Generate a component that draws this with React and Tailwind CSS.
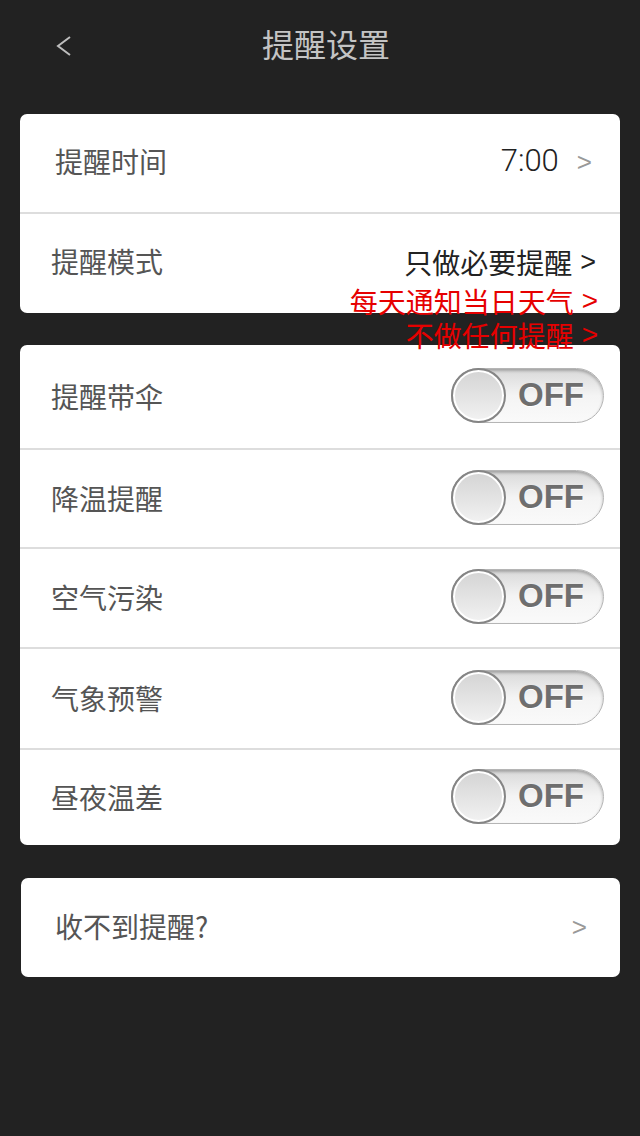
import React from 'react';

const cjk = { fontFamily: '"Noto Sans CJK SC", "Noto Sans", sans-serif' };

const Toggle = () => (
    <div className="relative w-[153px] h-[55px] rounded-full border border-[#b5b5b5] bg-gradient-to-b from-[#d9d9d9] via-[#f4f4f4] to-[#fafafa] shadow-[inset_0_2px_3px_rgba(0,0,0,0.25)]">
        <div className="absolute left-[-1px] top-[-1px] w-[55px] h-[55px] rounded-full border-2 border-[#858585] bg-gradient-to-b from-[#d4d4d4] to-[#f2f2f2] shadow-[inset_0_0_0_2px_#ffffff]" />
        <span
            className="absolute left-[66px] top-[8px] text-[33px] leading-[36px] font-bold text-[#6e6e6e] [text-shadow:0_1px_0_#ffffff]"
            style={{ fontFamily: '"Liberation Sans", Arial, sans-serif' }}
        >
            OFF
        </span>
    </div>
);

const Chevron = ({ className }) => (
    <span className={className} style={{ fontFamily: '"Liberation Sans", Arial, sans-serif' }}>&gt;</span>
);

export default function App() {
    const switches = [
        { label: '提醒带伞', h: 'h-[105px]' },
        { label: '降温提醒', h: 'h-[99px]' },
        { label: '空气污染', h: 'h-[100px]' },
        { label: '气象预警', h: 'h-[101px]' },
        { label: '昼夜温差', h: 'h-[95px]' },
    ];

    return (
        <div className="w-[640px] min-h-[1136px] bg-[#222222]" style={cjk}>
            {/* header */}
            <div className="relative h-[90px] flex items-center justify-center pl-[12px] pb-[4px]">
                <svg className="absolute left-[56px] top-[36px]" width="16" height="20" viewBox="0 0 16 20">
                    <polyline points="14,1 2,10 14,19" fill="none" stroke="#bdbdbd" strokeWidth="2" />
                </svg>
                <h1 className="text-[32px] text-[#c4c4c4]">提醒设置</h1>
            </div>

            <div className="px-[20px] pt-[24px] flex flex-col">
                {/* time + mode */}
                <div className="relative z-10 w-[600px] bg-white rounded-[7px]">
                    <div className="h-[100px] flex items-center pl-[35px] pr-[28px] border-b-2 border-[#dddddd]">
                        <span className="text-[28px] text-[#555555] -mt-[4px]">提醒时间</span>
                        <span className="ml-auto text-[31px] font-light text-[#222222] -mt-[4px]" style={{ fontFamily: 'Roboto, sans-serif' }}>7:00</span>
                        <Chevron className="ml-[18px] text-[26px] text-[#999999] -mt-[2px]" />
                    </div>
                    <div className="h-[99px] flex items-center pl-[31px] pr-[24px]">
                        <span className="text-[28px] text-[#555555] -mt-[6px]">提醒模式</span>
                        <span className="ml-auto text-[28px] text-[#222222] -mt-[3px]">只做必要提醒</span>
                        <Chevron className="ml-[8px] text-[27px] text-[#222222] -mt-[3px]" />
                    </div>
                    <div className="absolute right-[22px] top-[170px] flex flex-col items-end text-[28px] leading-[34px] text-[#e60000]">
                        <div className="flex items-center gap-[8px]">
                            <span>每天通知当日天气</span>
                            <Chevron />
                        </div>
                        <div className="flex items-center gap-[8px]">
                            <span>不做任何提醒</span>
                            <Chevron />
                        </div>
                    </div>
                </div>

                {/* switches */}
                <div className="mt-[32px] w-[600px] bg-white rounded-[7px]">
                    {switches.map((s, i) => (
                        <div
                            key={s.label}
                            className={`${s.h} flex items-center pl-[31px] pr-[16px] ${i < switches.length - 1 ? 'border-b-2 border-[#dddddd]' : ''}`}
                        >
                            <span className="text-[28px] text-[#555555] -mt-[2px]">{s.label}</span>
                            <div className="ml-auto -mt-[3px]">
                                <Toggle />
                            </div>
                        </div>
                    ))}
                </div>

                {/* help */}
                <div className="mt-[33px] ml-[1px] w-[599px] h-[99px] bg-white rounded-[7px] flex items-center pl-[34px] pr-[33px]">
                    <span className="text-[28px] text-[#555555] -mt-[3px]">收不到提醒?</span>
                    <Chevron className="ml-auto text-[26px] text-[#999999]" />
                </div>
            </div>
        </div>
    );
}
